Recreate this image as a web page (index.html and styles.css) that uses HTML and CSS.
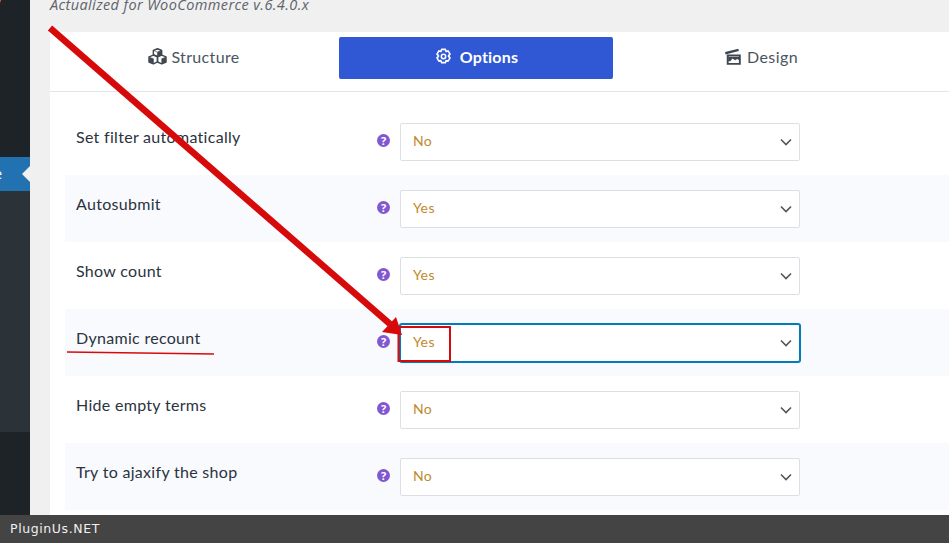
FILE: index.html
```html
<!DOCTYPE html>
<html lang="en">
<head>
<meta charset="utf-8">
<title>Options</title>
<link rel="stylesheet" href="styles.css">
</head>
<body>
<div class="app">
  <aside class="sidebar">
    <div class="side-top"><span class="side-tick">W</span></div>
    <div class="side-active"><span class="side-label">Page</span><span class="side-notch"></span></div>
    <div class="side-sub"></div>
    <div class="side-bottom"></div>
  </aside>
  <main class="main">
    <p class="note">Actualized for WooCommerce v.6.4.0.x</p>
    <section class="panel">
      <nav class="tabs">
        <a class="tab tab-structure">
          <svg class="tab-icon" viewBox="0 0 20 18"><g fill="#3f4750" stroke="#3f4750" stroke-width=".6" stroke-linejoin="round"><path d="M10 .8l4.400 1.700v4.600L10 8.900 5.600 7.100V2.500z" fill="none" stroke-width="1.500"/><path d="M10 4.300L6 2.700 10 1.200l4 1.500z" fill="none"/><path d="M10 4.500v4.200l4-1.600V3z"/><path d="M1 9.400l4.700-1.800 4.300 1.800v5.400l-4.300 2-4.700-2z" fill="none" stroke-width="1.500"/><path d="M5.700 11.400v5.200l-4.400-2V9.700z"/><path d="M10 9.400l4.500-1.800 4.500 1.800v5.400l-4.500 2-4.500-2z" fill="none" stroke-width="1.500"/><path d="M14.500 11.400v5.200l4.300-2V9.700z"/></g></svg>
          <span>Structure</span>
        </a>
        <a class="tab tab-active">
          <svg class="tab-icon" viewBox="0 0 18 18"><path d="M7 1.500h4l.7 2.100 2.200-.5 2 3.400-1.500 1.600v.8l1.500 1.600-2 3.400-2.200-.5-.7 2.100H7l-.7-2.100-2.200.5-2-3.400 1.500-1.600v-.8L2.100 6.500l2-3.400 2.200.5z" fill="none" stroke="#fff" stroke-width="1.700" stroke-linejoin="round"/><circle cx="9" cy="9" r="2.300" fill="none" stroke="#fff" stroke-width="1.600"/></svg>
          <span>Options</span>
        </a>
        <a class="tab tab-design">
          <svg class="tab-icon" viewBox="0 0 18 16"><path d="M1 3.800L13.500 .6l.6 2.200L1.500 6z" fill="#3f4750"/><path d="M3.500 7h11.500v8H3.500z" fill="none" stroke="#3f4750" stroke-width="1.800"/><path d="M4 8.500h10.500v3l-2-1.200-2 1.200-2.500-1.500-2 2.500H4z" fill="#3f4750"/></svg>
          <span>Design</span>
        </a>
      </nav>
      <div class="rows">
        <div class="row">
          <span class="row-label">Set filter automatically</span>
          <span class="help">?</span>
          <div class="select"><span class="select-value">No</span><svg class="chevron" viewBox="0 0 12 8"><path d="M1 1.500l5 5 5-5"/></svg></div>
        </div>
        <div class="row row-alt">
          <span class="row-label">Autosubmit</span>
          <span class="help">?</span>
          <div class="select"><span class="select-value">Yes</span><svg class="chevron" viewBox="0 0 12 8"><path d="M1 1.500l5 5 5-5"/></svg></div>
        </div>
        <div class="row">
          <span class="row-label">Show count</span>
          <span class="help">?</span>
          <div class="select"><span class="select-value">Yes</span><svg class="chevron" viewBox="0 0 12 8"><path d="M1 1.500l5 5 5-5"/></svg></div>
        </div>
        <div class="row row-alt">
          <span class="row-label">Dynamic recount</span>
          <span class="help">?</span>
          <div class="select select-focus"><span class="select-value">Yes</span><svg class="chevron" viewBox="0 0 12 8"><path d="M1 1.500l5 5 5-5"/></svg></div>
        </div>
        <div class="row">
          <span class="row-label">Hide empty terms</span>
          <span class="help">?</span>
          <div class="select"><span class="select-value">No</span><svg class="chevron" viewBox="0 0 12 8"><path d="M1 1.500l5 5 5-5"/></svg></div>
        </div>
        <div class="row row-alt">
          <span class="row-label">Try to ajaxify the shop</span>
          <span class="help">?</span>
          <div class="select"><span class="select-value">No</span><svg class="chevron" viewBox="0 0 12 8"><path d="M1 1.500l5 5 5-5"/></svg></div>
        </div>
      </div>
    </section>
  </main>
</div>
<footer class="footer">PluginUs.NET</footer>
<svg class="annotations" viewBox="0 0 949 543">
  <path class="ann-line" d="M50 28L390 324"/>
  <path class="ann-head" d="M402 335L382 332L396 317z"/>
  <rect class="ann-box" x="398.500" y="327" width="51.500" height="34"/>
  <path class="ann-under" d="M67 352L214 354"/>
</svg>
</body>
</html>
```
FILE: styles.css
```css
* { box-sizing: border-box; }
html, body { margin: 0; height: 100%; overflow: hidden; }
body {
  position: relative;
  display: flex;
  flex-direction: column;
  width: 949px;
  height: 543px;
  background: #f0f0f0;
  font-family: "Lato", "Noto Sans", sans-serif;
}
.app { display: flex; height: 515px; overflow: hidden; }

.sidebar { width: 30px; flex: none; display: flex; flex-direction: column; background: #1d2327; }
.side-top { height: 157px; position: relative; overflow: hidden; }
.side-tick { position: absolute; top: -6px; left: -11px; color: #f0b849; font-size: 12px; }
.side-active { height: 34px; background: #2271b1; position: relative; overflow: hidden; color: #fff; font-size: 14px; line-height: 34px; font-family: "Open Sans", sans-serif; }
.side-label { position: absolute; right: 28px; white-space: nowrap; }
.side-notch { position: absolute; right: 0; top: 9px; border: 8px solid transparent; border-left: 0; border-right-color: #f0f0f1; }
.side-sub { height: 241px; background: #2c3338; }
.side-bottom { flex: 1; }

.main { flex: 1; min-width: 0; padding-left: 20px; }
.note {
  margin: -6px 0 0;
  height: 38px;
  font: italic 14.500px/22px "Open Sans", sans-serif;
  letter-spacing: .4px;
  color: #5c636a;
}
.panel { background: #fff; height: 483px; }
.tabs { display: flex; height: 60px; padding-top: 5px; border-bottom: 1px solid #e2e4e7; }
.tab {
  width: 274px;
  height: 42px;
  margin: 0 5px;
  padding-bottom: 3px;
  display: flex;
  align-items: center;
  justify-content: center;
  gap: 4px;
  border-radius: 2px;
  font-size: 16px;
  letter-spacing: .35px;
  color: #4a5460;
}
.tab-structure { padding-left: 4px; }
.tab-design { padding-left: 2px; letter-spacing: .45px; }
.tab-active { background: #3058d4; color: #fff; font-weight: 700; gap: 7px; letter-spacing: .2px; }
.tab-icon { width: 19px; height: 17px; flex: none; }

.rows { padding: 16px 0 0 15px; }
.row {
  display: flex;
  height: 67px;
  padding: 15px 0 0 11px;
}
.row-alt { background: #f9fafd; }
.row-label { width: 301px; flex: none; font-size: 16px; line-height: 30px; height: 30px; margin-top: -1px; letter-spacing: .3px; color: #2b3340; }
.help {
  width: 13px;
  height: 13px;
  margin: 11px 10px 0 0;
  flex: none;
  border-radius: 50%;
  background: #8258d0;
  color: #fff;
  font: 700 11px/13px "Open Sans", sans-serif;
  text-align: center;
}
.select {
  width: 400px;
  height: 38px;
  flex: none;
  display: flex;
  align-items: center;
  justify-content: space-between;
  padding: 0 7px 0 12px;
  background: #fff;
  border: 1px solid #dcdfe4;
  border-radius: 2px;
  color: #c0892b;
  font-size: 14px;
}
.select-value { margin-bottom: 3px; letter-spacing: .4px; }
.select-focus { border-color: #007cba; box-shadow: 0 0 0 1px #007cba; }
.chevron { width: 12px; height: 8px; fill: none; stroke: #555; stroke-width: 1.600; }

.footer {
  height: 28px;
  flex: none;
  padding-left: 10px;
  background: #444;
  color: #f0f0f0;
  font: 12.500px/28px "DejaVu Sans", sans-serif;
  letter-spacing: .6px;
}
.annotations { position: absolute; left: 0; top: 0; width: 949px; height: 543px; pointer-events: none; }
.ann-line { stroke: #d60a0a; stroke-width: 6.500; fill: none; }
.ann-head { fill: #d60a0a; }
.ann-box { fill: none; stroke: #d60a0a; stroke-width: 2; }
.ann-under { fill: none; stroke: #d60a0a; stroke-width: 1.600; }
```
